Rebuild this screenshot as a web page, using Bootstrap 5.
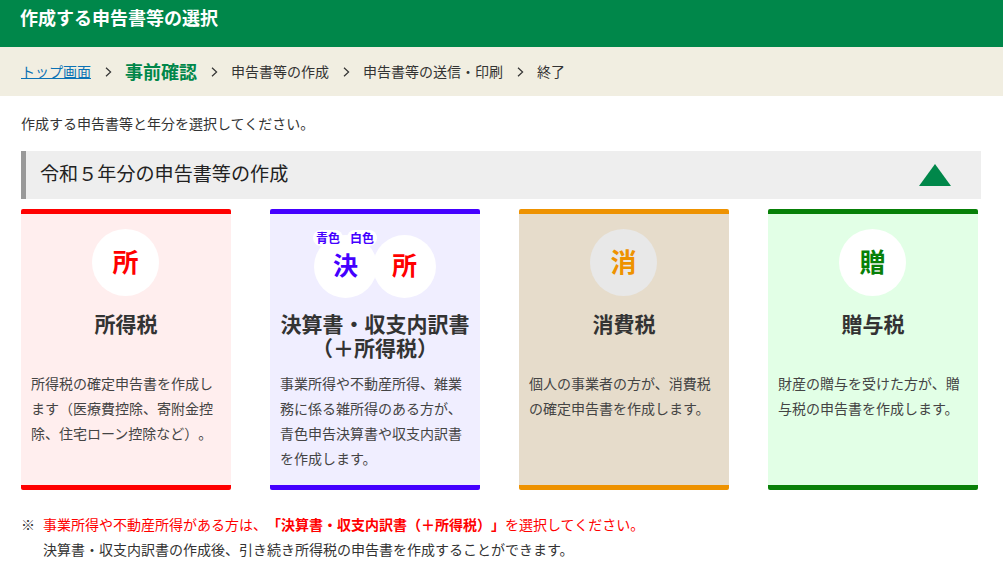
<!DOCTYPE html>
<html lang="ja">
<head>
<meta charset="utf-8">
<title>作成する申告書等の選択</title>
<link href="https://cdn.jsdelivr.net/npm/bootstrap@5.3.0/dist/css/bootstrap.min.css" rel="stylesheet">
<style>
html,body{height:577px;overflow:hidden}
body{font-family:"Noto Sans CJK JP","Noto Sans",sans-serif;font-size:14px;color:#333;line-height:25px;background:#fff;text-spacing-trim:space-all}
.page-head{background:#00874a;color:#fff;height:47px;padding:4px 20px 0;font-size:18px;font-weight:700;line-height:26px}
.steps{background:#f1eee1;height:49px;padding:0 21px;font-size:14px;color:#333}
.steps a{color:#0b72b5}
.steps .now{color:#00874a;font-size:18px;font-weight:700}
.chev{width:7px;height:10px;margin:0 13.5px;flex:none}
.lead-line{margin:15px 21px;line-height:25px;height:25px}
.sec-head{margin:0 22px 0 21px;height:48px;background:#eee;border-left:5px solid #999;padding:0 30px 0 14px;font-size:19.1px;font-weight:400;color:#222}
.sec-head h2{font-size:inherit;font-weight:inherit;margin:0 0 4px;line-height:44px}
.tri{width:32px;height:22px;flex:none}
.tax-grid{margin:10px 25px 0 21px;gap:39px}
.tax-card{width:210px;height:281px;flex:none;border-top:5px solid var(--c);border-bottom:5px solid var(--c);border-radius:2px;background:var(--b);padding:15px 10px 0}
.disc-wrap{height:68px}
.disc{width:67px;height:67px;margin-right:1px;border-radius:50%;background:#fff;color:var(--c);font-size:26px;font-weight:700;line-height:63px;text-align:center}
.disc.grey{background:#e8e8e8}
.pair{padding-top:6px;position:relative}
.pair .disc{width:63px;height:63px;margin-right:0;line-height:59px;font-size:25px}
.pair .disc+.disc{margin-left:-4px;color:#f00}
.tag{position:absolute;top:1px;height:16px;padding:0 3px;border-radius:8px;background:#fff;color:var(--c);font-size:12px;font-weight:700;line-height:16px}
.tag-a{left:33px}
.tag-b{left:67px}
.tax-name{font-size:21px;font-weight:700;line-height:24px;text-align:center;margin:14px -5px 0;color:#333;height:48px}
.tax-text{margin:12px 0 0;line-height:25px;color:#444;font-size:14px}
.notes{margin:22px 21px 0;font-size:14px}
.notes p{margin:0;line-height:25px}
.mark-col{width:22px;flex:none}
.warn{color:#f00}
</style>
</head>
<body>
<header class="page-head">作成する申告書等の選択</header>
<nav class="steps d-flex align-items-center" aria-label="手順">
  <a href="#">トップ画面</a>
  <svg class="chev" viewBox="0 0 7 10"><path d="M1 .8 5.6 5 1 9.2" fill="none" stroke="#333" stroke-width="1.2"/></svg>
  <span class="now">事前確認</span>
  <svg class="chev" viewBox="0 0 7 10"><path d="M1 .8 5.6 5 1 9.2" fill="none" stroke="#333" stroke-width="1.2"/></svg>
  <span>申告書等の作成</span>
  <svg class="chev" viewBox="0 0 7 10"><path d="M1 .8 5.6 5 1 9.2" fill="none" stroke="#333" stroke-width="1.2"/></svg>
  <span>申告書等の送信・印刷</span>
  <svg class="chev" viewBox="0 0 7 10"><path d="M1 .8 5.6 5 1 9.2" fill="none" stroke="#333" stroke-width="1.2"/></svg>
  <span>終了</span>
</nav>
<p class="lead-line">作成する申告書等と年分を選択してください。</p>
<div class="sec-head d-flex justify-content-between align-items-center">
  <h2>令和５年分の申告書等の作成</h2>
  <svg class="tri" viewBox="0 0 32 22"><path d="M16 0 32 22H0Z" fill="#00874a"/></svg>
</div>
<div class="tax-grid d-flex">
  <section class="tax-card" style="--c:#f00;--b:#ffeeee">
    <div class="disc-wrap d-flex justify-content-center"><div class="disc">所</div></div>
    <h3 class="tax-name">所得税</h3>
    <p class="tax-text">所得税の確定申告書を作成します（医療費控除、寄附金控除、住宅ローン控除など）。</p>
  </section>
  <section class="tax-card" style="--c:#4400ff;--b:#f0eeff">
    <div class="disc-wrap pair d-flex justify-content-center">
      <div class="disc">決</div><div class="disc">所</div>
      <span class="tag tag-a">青色</span><span class="tag tag-b">白色</span>
    </div>
    <h3 class="tax-name">決算書・収支内訳書<br>（＋所得税）</h3>
    <p class="tax-text">事業所得や不動産所得、雑業務に係る雑所得のある方が、青色申告決算書や収支内訳書を作成します。</p>
  </section>
  <section class="tax-card" style="--c:#ee9200;--b:#e6dccb">
    <div class="disc-wrap d-flex justify-content-center"><div class="disc grey">消</div></div>
    <h3 class="tax-name">消費税</h3>
    <p class="tax-text">個人の事業者の方が、消費税の確定申告書を作成します。</p>
  </section>
  <section class="tax-card" style="--c:#088008;--b:#e2ffe6">
    <div class="disc-wrap d-flex justify-content-center"><div class="disc">贈</div></div>
    <h3 class="tax-name">贈与税</h3>
    <p class="tax-text">財産の贈与を受けた方が、贈与税の申告書を作成します。</p>
  </section>
</div>
<div class="notes d-flex">
  <div class="mark-col">※</div>
  <div>
    <p class="warn">事業所得や不動産所得がある方は、<b>「決算書・収支内訳書（＋所得税）」</b>を選択してください。</p>
    <p>決算書・収支内訳書の作成後、引き続き所得税の申告書を作成することができます。</p>
  </div>
</div>
</body>
</html>
